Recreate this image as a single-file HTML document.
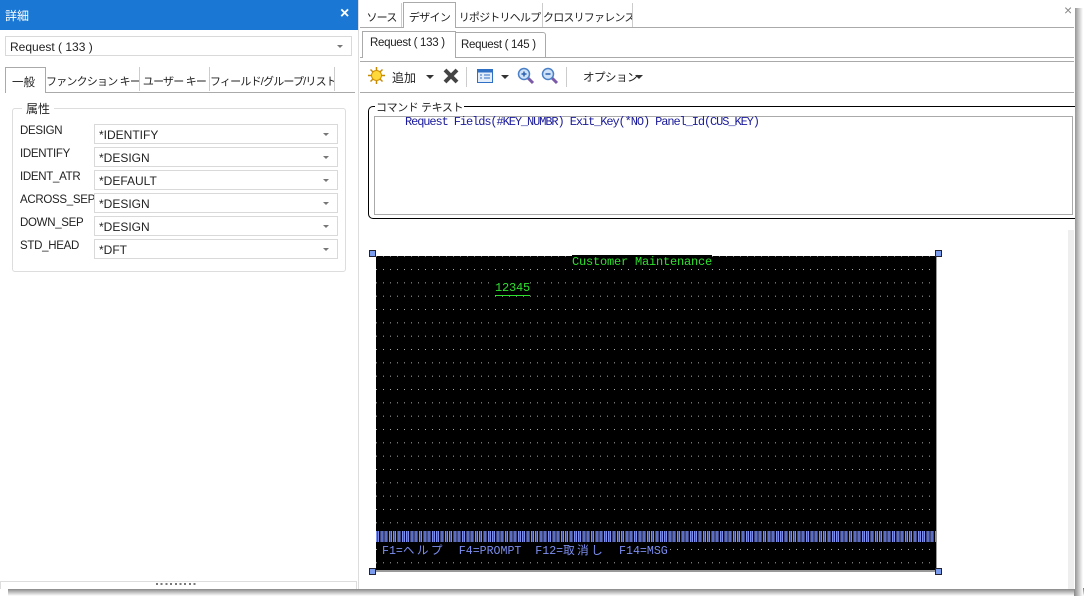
<!DOCTYPE html>
<html><head><meta charset="utf-8"><style>
*{box-sizing:border-box;margin:0;padding:0}
body{width:1089px;height:604px;background:#fff;position:relative;overflow:hidden;font-family:"Liberation Sans","Noto Sans CJK JP",sans-serif;font-size:12px;color:#222}
.a{position:absolute;white-space:nowrap}
.combo{position:absolute;border:1px solid #d9d9d9;background:#fff;height:20px;padding:3px 4px;font-size:12px;white-space:nowrap}
.combo:after{content:"";position:absolute;right:8px;top:8px;border-left:3px solid transparent;border-right:3px solid transparent;border-top:3px solid #777}
.lbl{position:absolute;left:20px;font-size:11.5px;letter-spacing:-0.3px;white-space:nowrap}
.tab{position:absolute;font-size:11px;padding-top:6px;text-align:center;border-right:1px solid #ccc;white-space:nowrap;letter-spacing:-0.8px;overflow:hidden}
.h{position:absolute;width:7px;height:7px;background:#7c9cf0;border:1px solid #223}
.mono{font-family:"Liberation Mono",monospace;white-space:pre}
.j{font-family:"Noto Sans CJK JP",sans-serif;letter-spacing:2.4px}
</style></head><body>
<div class="a" style="left:8px;top:588px;width:1076px;height:8px;background:linear-gradient(#777,#fff)"></div>
<div class="a" style="left:1074px;top:8px;width:9px;height:588px;background:linear-gradient(90deg,#888,#fff)"></div>
<div class="a" style="left:0;top:0;width:1075px;height:589px;background:#fff"></div>

<div class="a" style="left:0;top:0;width:358px;height:30px;background:#1a78d4;color:#fff;font-size:12px;padding:7px 5px">詳細</div>
<div class="a" style="left:340px;top:5px;color:#fff;font-size:16px;font-weight:bold">×</div>
<div class="combo" style="left:5px;top:36px;width:347px;height:20px">Request ( 133 )</div>
<div class="a" style="left:5px;top:92px;width:350px;height:1px;background:#aaa"></div>
<div class="a" style="left:5px;top:67px;width:41px;height:26px;border:1px solid #aaa;border-bottom:none;background:#fff;padding:6px 6px;font-size:11.5px">一般</div>
<div class="tab" style="left:46px;top:67px;width:94px;height:24px">ファンクション キー</div>
<div class="tab" style="left:140px;top:67px;width:70px;height:24px">ユーザー キー</div>
<div class="tab" style="left:210px;top:67px;width:125px;height:24px">フィールド/グループ/リスト</div>
<div class="a" style="left:12px;top:108px;width:334px;height:164px;border:1px solid #ddd;border-radius:3px"></div>
<div class="a" style="left:22px;top:100px;background:#fff;padding:0 4px;font-size:12px">属性</div>
<div class="lbl" style="top:125px">DESIGN</div>
<div class="lbl" style="top:148px">IDENTIFY</div>
<div class="lbl" style="top:171px">IDENT_ATR</div>
<div class="lbl" style="top:194px">ACROSS_SEP</div>
<div class="lbl" style="top:217px">DOWN_SEP</div>
<div class="lbl" style="top:240px">STD_HEAD</div>
<div class="combo" style="left:94px;top:124px;width:244px">*IDENTIFY</div>
<div class="combo" style="left:94px;top:147px;width:244px">*DESIGN</div>
<div class="combo" style="left:94px;top:170px;width:244px">*DEFAULT</div>
<div class="combo" style="left:94px;top:193px;width:244px">*DESIGN</div>
<div class="combo" style="left:94px;top:216px;width:244px">*DESIGN</div>
<div class="combo" style="left:94px;top:239px;width:244px">*DFT</div>
<div class="a" style="left:0;top:581px;width:357px;height:8px;border:1px solid #ddd;border-bottom:none"></div>
<div class="a" style="left:156px;top:583px;width:42px;height:2px;background:repeating-linear-gradient(90deg,#777 0 2px,transparent 2px 4.7px)"></div>
<div class="a" style="left:358px;top:0;width:1px;height:589px;background:#ddd"></div>

<div class="a" style="left:360px;top:27px;width:714px;height:1px;background:#aaa"></div>
<div class="tab" style="left:362px;top:3px;width:40px;height:24px">ソース</div>
<div class="a" style="left:403px;top:2px;width:53px;height:26px;border:1px solid #aaa;border-bottom:none;background:#fff;padding:6px 0;text-align:center;font-size:11px;letter-spacing:-0.6px">デザイン</div>
<div class="tab" style="left:457px;top:3px;width:86px;height:24px">リポジトリヘルプ</div>
<div class="tab" style="left:543px;top:3px;width:90px;height:24px">クロスリファレンス</div>
<div class="a" style="left:1064px;top:2px;color:#888;font-size:14px">×</div>

<div class="a" style="left:360px;top:57px;width:714px;height:1px;background:#aaa"></div>
<div class="a" style="left:360px;top:61px;width:714px;height:1px;background:#aaa"></div>
<div class="a" style="left:362px;top:31px;width:94px;height:27px;border:1px solid #aaa;border-bottom:none;background:#fff;padding:5px 7px;font-size:11.5px;letter-spacing:-0.3px">Request ( 133 )</div>
<div class="a" style="left:456px;top:32px;width:90px;height:26px;border:1px solid #aaa;border-left:none;border-radius:0 3px 0 0;padding:6px 5px;font-size:11.5px;letter-spacing:-0.3px">Request ( 145 )</div>

<svg class="a" style="left:368px;top:67px" width="17" height="17" viewBox="0 0 17 17"><g stroke="#c88a00" stroke-width="1.5"><line x1="8.5" y1="0" x2="8.5" y2="17"/><line x1="0" y1="8.5" x2="17" y2="8.5"/><line x1="2.5" y1="2.5" x2="14.5" y2="14.5"/><line x1="14.5" y1="2.5" x2="2.5" y2="14.5"/></g><circle cx="8.5" cy="8.5" r="5" fill="#ffd83a" stroke="#d09000"/></svg>
<div class="a" style="left:392px;top:69px">追加</div>
<div class="a" style="left:426px;top:75px;border-left:4px solid transparent;border-right:4px solid transparent;border-top:4px solid #333"></div>
<svg class="a" style="left:443px;top:68px" width="16" height="16" viewBox="0 0 16 16"><path d="M2 2L14 14M14 2L2 14" stroke="#444" stroke-width="4"/></svg>
<div class="a" style="left:466px;top:67px;width:1px;height:20px;background:#ccc"></div>
<svg class="a" style="left:477px;top:69px" width="16" height="14" viewBox="0 0 16 14"><rect x="0.5" y="0.5" width="15" height="13" fill="#e4eefa" stroke="#2f6fc4"/><rect x="0.5" y="0.5" width="15" height="3" fill="#2f6fc4"/><path d="M3 6h2M7 6h6M3 9h2M7 9h6" stroke="#2f6fc4"/></svg>
<div class="a" style="left:501px;top:75px;border-left:4px solid transparent;border-right:4px solid transparent;border-top:4px solid #333"></div>
<svg class="a" style="left:517px;top:67px" width="18" height="18" viewBox="0 0 18 18"><line x1="10" y1="10" x2="16" y2="16" stroke="#7a5aa8" stroke-width="3"/><circle cx="7" cy="7" r="5.5" fill="#cfe2f8" stroke="#4a80c8" stroke-width="1.5"/><path d="M4.5 7h5M7 4.5v5" stroke="#2a60b0" stroke-width="1.5"/></svg>
<svg class="a" style="left:541px;top:67px" width="18" height="18" viewBox="0 0 18 18"><line x1="10" y1="10" x2="16" y2="16" stroke="#7a5aa8" stroke-width="3"/><circle cx="7" cy="7" r="5.5" fill="#cfe2f8" stroke="#4a80c8" stroke-width="1.5"/><path d="M4.5 7h5" stroke="#2a60b0" stroke-width="1.5"/></svg>
<div class="a" style="left:566px;top:67px;width:1px;height:20px;background:#ccc"></div>
<div class="a" style="left:583px;top:69px;font-size:11.5px;letter-spacing:-0.5px">オプション</div>
<div class="a" style="left:635px;top:75px;border-left:4px solid transparent;border-right:4px solid transparent;border-top:4px solid #333"></div>
<div class="a" style="left:360px;top:92px;width:714px;height:1px;background:#aaa"></div>

<div class="a" style="left:368px;top:106px;width:707px;height:113px;border:1px solid #000;border-right:none;border-radius:5px 0 0 5px"></div>
<div class="a" style="left:375px;top:99px;background:#fff;padding:0 1px;font-size:11px;letter-spacing:-0.4px">コマンド テキスト</div>
<div class="a" style="left:374px;top:116px;width:699px;height:99px;border:1px solid #aaa"></div>
<div class="a mono" style="left:405px;top:115px;color:#1a1a9a;font-size:12px;letter-spacing:-1.1px">Request Fields(#KEY_NUMBR) Exit_Key(*NO) Panel_Id(CUS_KEY)</div>

<div class="a" style="left:1068px;top:230px;width:6px;height:359px;background:#eee"></div>

<div class="a" style="left:376px;top:256px;width:561px;height:316px;background:#000;border-right:1px solid #999;border-bottom:2px solid #999"></div>
<svg class="a" style="left:376px;top:256px" width="560" height="314"><defs><pattern id="d" width="7" height="13.33" patternUnits="userSpaceOnUse" y="-0.3"><rect x="0" y="0" width="1" height="1" fill="#aaa"/></pattern></defs><rect width="560" height="314" fill="url(#d)"/></svg>
<div class="a mono" style="left:572px;top:255px;color:#2ee02e;font-size:12px;letter-spacing:-0.2px;background:#000">Customer Maintenance</div>
<div class="a mono" style="left:495px;top:281px;color:#2ee02e;font-size:12px;letter-spacing:-0.2px;background:#000;border-bottom:1px solid #2ee02e">12345</div>
<div class="a" style="left:376px;top:531px;width:560px;height:11px;background:repeating-linear-gradient(90deg,#7c8ef0 0 1px,#3a4a99 1px 2px,#7c8ef0 2px 3px,#000 3px 4.3px)"></div>
<div class="a mono" style="left:382px;top:542px;color:#7c8ef0;font-size:11.6px;background:#000">F1=<span class="j">ヘルプ</span>  F4=PROMPT  F12=<span class="j">取消し</span>  F14=MSG</div>
<div class="h" style="left:369px;top:250px"></div>
<div class="h" style="left:935px;top:250px"></div>
<div class="h" style="left:369px;top:568px"></div>
<div class="h" style="left:935px;top:568px"></div>
</body></html>
